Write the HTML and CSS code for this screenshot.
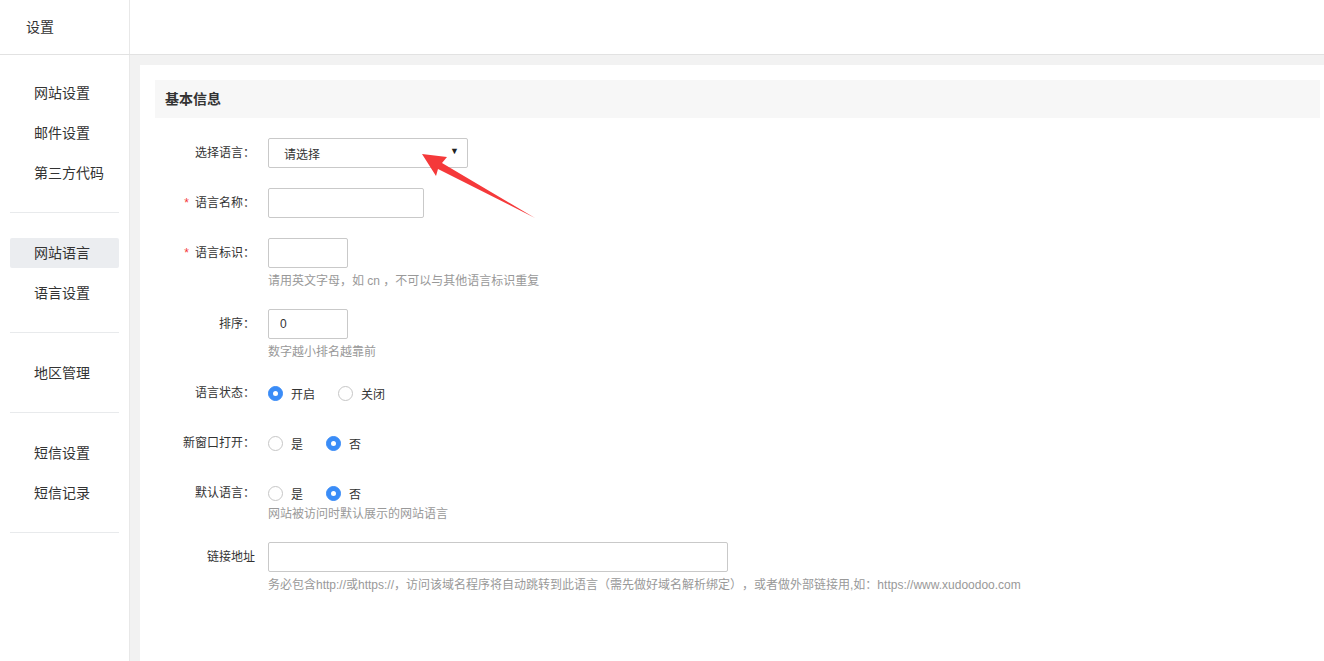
FILE: index.html
```html
<!DOCTYPE html>
<html lang="zh-CN">
<head>
  <meta charset="UTF-8"/>
  <title>设置 - 网站语言</title>
  <link rel="stylesheet" href="styles.css">
</head>
<body>

  <!-- top bar -->
  <div class="topbar">
    <div class="topbar-title">设置</div>
    <div class="topbar-rest"></div>
  </div>

  <div class="layout">
    <!-- left menu -->
    <div class="sidebar">
      <div class="nav-group first">
        <div class="nav-item">网站设置</div>
        <div class="nav-item">邮件设置</div>
        <div class="nav-item">第三方代码</div>
      </div>
      <div class="nav-group">
        <div class="nav-item active">网站语言</div>
        <div class="nav-item">语言设置</div>
      </div>
      <div class="nav-group">
        <div class="nav-item">地区管理</div>
      </div>
      <div class="nav-group">
        <div class="nav-item">短信设置</div>
        <div class="nav-item">短信记录</div>
      </div>
    </div>

    <!-- main content -->
    <div class="main">
      <div class="card">
        <div class="card-header">基本信息</div>

        <div class="form">
          <div class="form-item">
            <label class="form-label">选择语言：</label>
            <div class="form-block">
              <div class="select">
                <span>请选择</span>
                <span class="select-arrow">▼</span>
              </div>
            </div>
          </div>

          <div class="form-item">
            <label class="form-label"><span class="req">*</span>语言名称：</label>
            <div class="form-block">
              <input class="input w-name" type="text">
            </div>
          </div>

          <div class="form-item">
            <label class="form-label"><span class="req">*</span>语言标识：</label>
            <div class="form-block">
              <input class="input w-short" type="text">
              <div class="hint">请用英文字母，如 cn ，不可以与其他语言标识重复</div>
            </div>
          </div>

          <div class="form-item">
            <label class="form-label">排序：</label>
            <div class="form-block">
              <input class="input w-short" type="text" value="0">
              <div class="hint">数字越小排名越靠前</div>
            </div>
          </div>

          <div class="form-item radio-row">
            <label class="form-label">语言状态：</label>
            <div class="form-block">
              <div class="radios">
                <span class="radio checked"><i></i>开启</span>
                <span class="radio"><i></i>关闭</span>
              </div>
            </div>
          </div>

          <div class="form-item radio-row">
            <label class="form-label">新窗口打开：</label>
            <div class="form-block">
              <div class="radios">
                <span class="radio"><i></i>是</span>
                <span class="radio checked"><i></i>否</span>
              </div>
            </div>
          </div>

          <div class="form-item radio-row with-hint">
            <label class="form-label">默认语言：</label>
            <div class="form-block">
              <div class="radios">
                <span class="radio"><i></i>是</span>
                <span class="radio checked"><i></i>否</span>
              </div>
              <div class="hint">网站被访问时默认展示的网站语言</div>
            </div>
          </div>

          <div class="form-item">
            <label class="form-label">链接地址</label>
            <div class="form-block">
              <input class="input w-long" type="text">
              <div class="hint">务必包含http://或https://，访问该域名程序将自动跳转到此语言（需先做好域名解析绑定），或者做外部链接用,如：https://www.xudoodoo.com</div>
            </div>
          </div>
        </div>
      </div>
    </div>
  </div>

  <!-- red annotation arrow -->
  <svg class="mark-arrow" width="130" height="80" viewBox="0 0 130 80">
    <polygon points="7,6 32,9 27,15 120,70 23,21 21,28" fill="#f5393a"/>
  </svg>

</body>
</html>
```

FILE: styles.css
```css
* {
  box-sizing: border-box;
}
html, body {
  margin: 0;
  padding: 0;
  height: 100%;
  overflow: hidden;
}
body {
  font-family: "Liberation Sans", "Noto Sans CJK SC", sans-serif;
  color: #333;
  background: #fff;
  position: relative;
  text-spacing-trim: space-all;
}

/* top bar */
.topbar {
  display: flex;
  height: 55px;
  border-bottom: 1px solid #e2e2e2;
}
.topbar-title {
  width: 130px;
  border-right: 1px solid #e8e8e8;
  padding-left: 26px;
  font-size: 14px;
  line-height: 54px;
}
.topbar-rest {
  flex: 1;
}

.layout {
  display: flex;
  height: calc(100% - 55px);
}

/* sidebar */
.sidebar {
  width: 130px;
  border-right: 1px solid #e8e8e8;
  flex-shrink: 0;
}
.nav-group {
  margin: 0 10px;
  padding: 25px 0 24px;
  border-bottom: 1px solid #e8eaec;
}
.nav-group.first {
  padding-top: 23px;
}
.nav-item {
  height: 30px;
  line-height: 30px;
  padding-left: 24px;
  font-size: 14px;
  color: #333;
  border-radius: 2px;
  margin-bottom: 10px;
}
.nav-item:last-child {
  margin-bottom: 0;
}
.nav-item.active {
  background: #ebedf0;
}

/* main */
.main {
  flex: 1;
  background: #f2f2f2;
  padding: 10px 0 0 10px;
  overflow: hidden;
}
.card {
  background: #fff;
  height: 100%;
  padding: 15px 4px 0 15px;
}
.card-header {
  height: 38px;
  line-height: 38px;
  background: #f7f7f7;
  padding-left: 10px;
  font-size: 14px;
  font-weight: bold;
  color: #333;
}

/* form */
.form {
  padding-top: 20px;
}
.form-item {
  display: flex;
  margin-bottom: 20px;
}
.form-label {
  width: 100px;
  text-align: right;
  font-size: 12px;
  line-height: 30px;
  color: #333;
  white-space: nowrap;
}
.req {
  color: #f5393a;
  margin-right: 6px;
}
.form-block {
  margin-left: 13px;
}
.input {
  display: block;
  height: 30px;
  border: 1px solid #c9c9c9;
  border-radius: 2px;
  padding: 0 11px;
  font-family: inherit;
  font-size: 12px;
  color: #333;
  outline: none;
}
.w-name {
  width: 156px;
}
.w-short {
  width: 80px;
}
.w-long {
  width: 460px;
}
.select {
  width: 200px;
  height: 30px;
  border: 1px solid #c9c9c9;
  border-radius: 2px;
  padding: 0 8px 0 15px;
  display: flex;
  justify-content: space-between;
  align-items: center;
  font-size: 12px;
}
.select-arrow {
  font-size: 9px;
  color: #222;
  margin-top: -4px;
}
.hint {
  margin-top: 5px;
  font-size: 12px;
  line-height: 16px;
  color: #999;
  white-space: nowrap;
}

/* radios */
.radio-row {
  margin-bottom: 24px;
}
.radio-row .form-label {
  line-height: 26px;
}
.radio-row.with-hint {
  margin-bottom: 20px;
}
.radio-row .hint {
  margin-top: 0;
}
.radios {
  display: flex;
  align-items: center;
  height: 26px;
}
.radio {
  display: flex;
  align-items: center;
  font-size: 12px;
  color: #333;
  margin-right: 23px;
}
.radio i {
  width: 15px;
  height: 15px;
  border: 1px solid #c6c6c6;
  border-radius: 50%;
  margin-right: 8px;
  background: #fff;
  position: relative;
}
.radio.checked i {
  background: #3a8cf7;
  border-color: #3a8cf7;
}
.radio.checked i::after {
  content: "";
  position: absolute;
  left: 4px;
  top: 4px;
  width: 5px;
  height: 5px;
  border-radius: 50%;
  background: #fff;
}

/* annotation arrow */
.mark-arrow {
  position: absolute;
  left: 415px;
  top: 148px;
  pointer-events: none;
}
```
